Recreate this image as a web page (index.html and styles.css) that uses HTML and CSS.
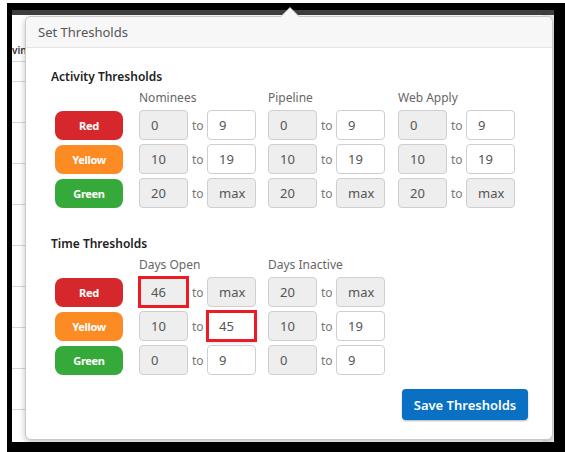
FILE: index.html
```html
<!DOCTYPE html>
<html lang="en">
<head>
    <meta charset="UTF-8">
    <meta name="viewport" content="width=device-width, initial-scale=1.0">
    <title>Set Thresholds</title>
    <link rel="stylesheet" href="styles.css">
</head>
<body>
    <div class="frame">
        <div class="topbar"></div>
        <div class="backdrop">
            <div class="table">
                <div class="table-row table-head"><span class="cut">vin</span></div>
                <div class="table-row thin"></div>
                <div class="table-row"></div>
                <div class="table-row"></div>
                <div class="table-row"></div>
                <div class="table-row"></div>
                <div class="table-row"></div>
                <div class="table-row"></div>
                <div class="table-row"></div>
                <div class="table-row"></div>
            </div>
            <div class="side-strip"></div>
        </div>
    </div>

    <div class="popover">
        <div class="popover-header">Set Thresholds</div>
        <div class="popover-body">
            <h3 class="section-title">Activity Thresholds</h3>
            <div class="grid">
                <span></span>
                <span class="col-label">Nominees</span>
                <span class="col-label">Pipeline</span>
                <span class="col-label">Web Apply</span>

                <span class="badge red">Red</span>
                <div class="range"><input class="num" value="0" disabled><span class="to">to</span><input class="num" value="9"></div>
                <div class="range"><input class="num" value="0" disabled><span class="to">to</span><input class="num" value="9"></div>
                <div class="range"><input class="num" value="0" disabled><span class="to">to</span><input class="num" value="9"></div>

                <span class="badge yellow">Yellow</span>
                <div class="range"><input class="num" value="10" disabled><span class="to">to</span><input class="num" value="19"></div>
                <div class="range"><input class="num" value="10" disabled><span class="to">to</span><input class="num" value="19"></div>
                <div class="range"><input class="num" value="10" disabled><span class="to">to</span><input class="num" value="19"></div>

                <span class="badge green">Green</span>
                <div class="range"><input class="num" value="20" disabled><span class="to">to</span><input class="num" value="max" disabled></div>
                <div class="range"><input class="num" value="20" disabled><span class="to">to</span><input class="num" value="max" disabled></div>
                <div class="range"><input class="num" value="20" disabled><span class="to">to</span><input class="num" value="max" disabled></div>
            </div>

            <h3 class="section-title time">Time Thresholds</h3>
            <div class="grid">
                <span></span>
                <span class="col-label">Days Open</span>
                <span class="col-label">Days Inactive</span>
                <span></span>

                <span class="badge red">Red</span>
                <div class="range"><input class="num marked" value="46" disabled><span class="to">to</span><input class="num" value="max" disabled></div>
                <div class="range"><input class="num" value="20" disabled><span class="to">to</span><input class="num" value="max" disabled></div>
                <span></span>

                <span class="badge yellow">Yellow</span>
                <div class="range"><input class="num" value="10" disabled><span class="to">to</span><input class="num marked focused" value="45"></div>
                <div class="range"><input class="num" value="10" disabled><span class="to">to</span><input class="num" value="19"></div>
                <span></span>

                <span class="badge green">Green</span>
                <div class="range"><input class="num" value="0" disabled><span class="to">to</span><input class="num" value="9"></div>
                <div class="range"><input class="num" value="0" disabled><span class="to">to</span><input class="num" value="9"></div>
                <span></span>
            </div>

            <div class="actions">
                <button class="save-btn">Save Thresholds</button>
            </div>
        </div>
    </div>
</body>
</html>
```

FILE: styles.css
```css
html, body {
    height: 452px;
    overflow: hidden;
}

body {
    margin: 0;
    position: relative;
    background-color: #fff;
    font-family: "Noto Sans", "Open Sans", sans-serif;
}

.frame {
    margin: 3px 0 0 7px;
    width: 542px;
    height: 432px;
    border-style: solid;
    border-color: #000;
    border-width: 7px 11px 10px 5px;
    display: flex;
    flex-direction: column;
    background-color: #fff;
}

.topbar {
    height: 5px;
    background-color: #3e3e3e;
}

.backdrop {
    flex: 1;
    display: flex;
}

.table {
    flex: 1;
}

.table-row {
    height: 40px;
    border-bottom: 1px solid #d6d6d6;
}

.table-head {
    height: 47px;
    padding: 22px 0 0 0;
    box-sizing: border-box;
}

.thin {
    height: 19px;
}

.cut {
    font-size: 10px;
    font-weight: 600;
    color: #333;
}

.side-strip {
    width: 11px;
    background-color: #eeeeee;
}

/* popover */

.popover {
    position: absolute;
    left: 25px;
    top: 16px;
    width: 528px;
    height: 424px;
    box-sizing: border-box;
    border: 1px solid #c9c9c9;
    border-radius: 6px;
    background-color: #fff;
    box-shadow: 0 2px 6px rgba(0, 0, 0, 0.25);
}

.popover::before,
.popover::after {
    content: "";
    position: absolute;
    left: 254px;
    border-style: solid;
    border-color: transparent;
}

.popover::before {
    top: -10px;
    border-width: 0 10px 10px 10px;
    border-bottom-color: #c9c9c9;
}

.popover::after {
    top: -9px;
    left: 255px;
    border-width: 0 9px 9px 9px;
    border-bottom-color: #f7f7f7;
}

.popover-header {
    height: 30px;
    line-height: 30px;
    padding-left: 12px;
    background-color: #f7f7f7;
    border-bottom: 1px solid #e4e4e4;
    border-radius: 6px 6px 0 0;
    font-size: 13px;
    color: #555;
}

.popover-body {
    padding: 21px 24px 0 25px;
}

.section-title {
    margin: 0;
    font-size: 12px;
    line-height: 16px;
    font-weight: 600;
    color: #222;
}

.section-title.time {
    margin-top: 28px;
}

.grid {
    display: grid;
    grid-template-columns: 88px 129px 130px 117px;
    row-gap: 4px;
    align-items: center;
    margin-top: 5px;
}

.col-label {
    font-size: 12px;
    line-height: 16px;
    color: #666;
}

.badge {
    margin-left: 4px;
    width: 68px;
    height: 29px;
    line-height: 29px;
    border-radius: 8px;
    text-align: center;
    font-size: 11px;
    font-weight: 700;
    letter-spacing: -0.3px;
    color: #fff;
}

.red {
    background-color: #d6282c;
}

.yellow {
    background-color: #fd8b24;
}

.green {
    background-color: #36a93b;
}

.range {
    display: flex;
    align-items: center;
    gap: 4px;
}

.to {
    width: 11px;
    font-size: 12px;
    color: #777;
}

.num {
    width: 49px;
    height: 30px;
    box-sizing: border-box;
    margin: 0;
    padding: 0 0 0 11px;
    border: 1px solid #cfcfcf;
    border-radius: 4px;
    background-color: #fff;
    font-family: inherit;
    font-size: 13px;
    color: #555;
}

.num:disabled {
    background-color: #eeeeee;
    color: #555;
}

.marked {
    border-radius: 0;
    outline: 3px solid #ec1c24;
    outline-offset: -2px;
}

.focused {
    box-shadow: 0 1px 3px rgba(0, 114, 198, 0.35);
}

.actions {
    display: flex;
    justify-content: flex-end;
    margin-top: 14px;
}

.save-btn {
    width: 126px;
    height: 31px;
    border: none;
    border-radius: 4px;
    background-color: #0a70c4;
    color: #fff;
    font-family: inherit;
    font-size: 13px;
    font-weight: 600;
    box-shadow: 0 1px 2px rgba(0, 0, 0, 0.3);
}
```
